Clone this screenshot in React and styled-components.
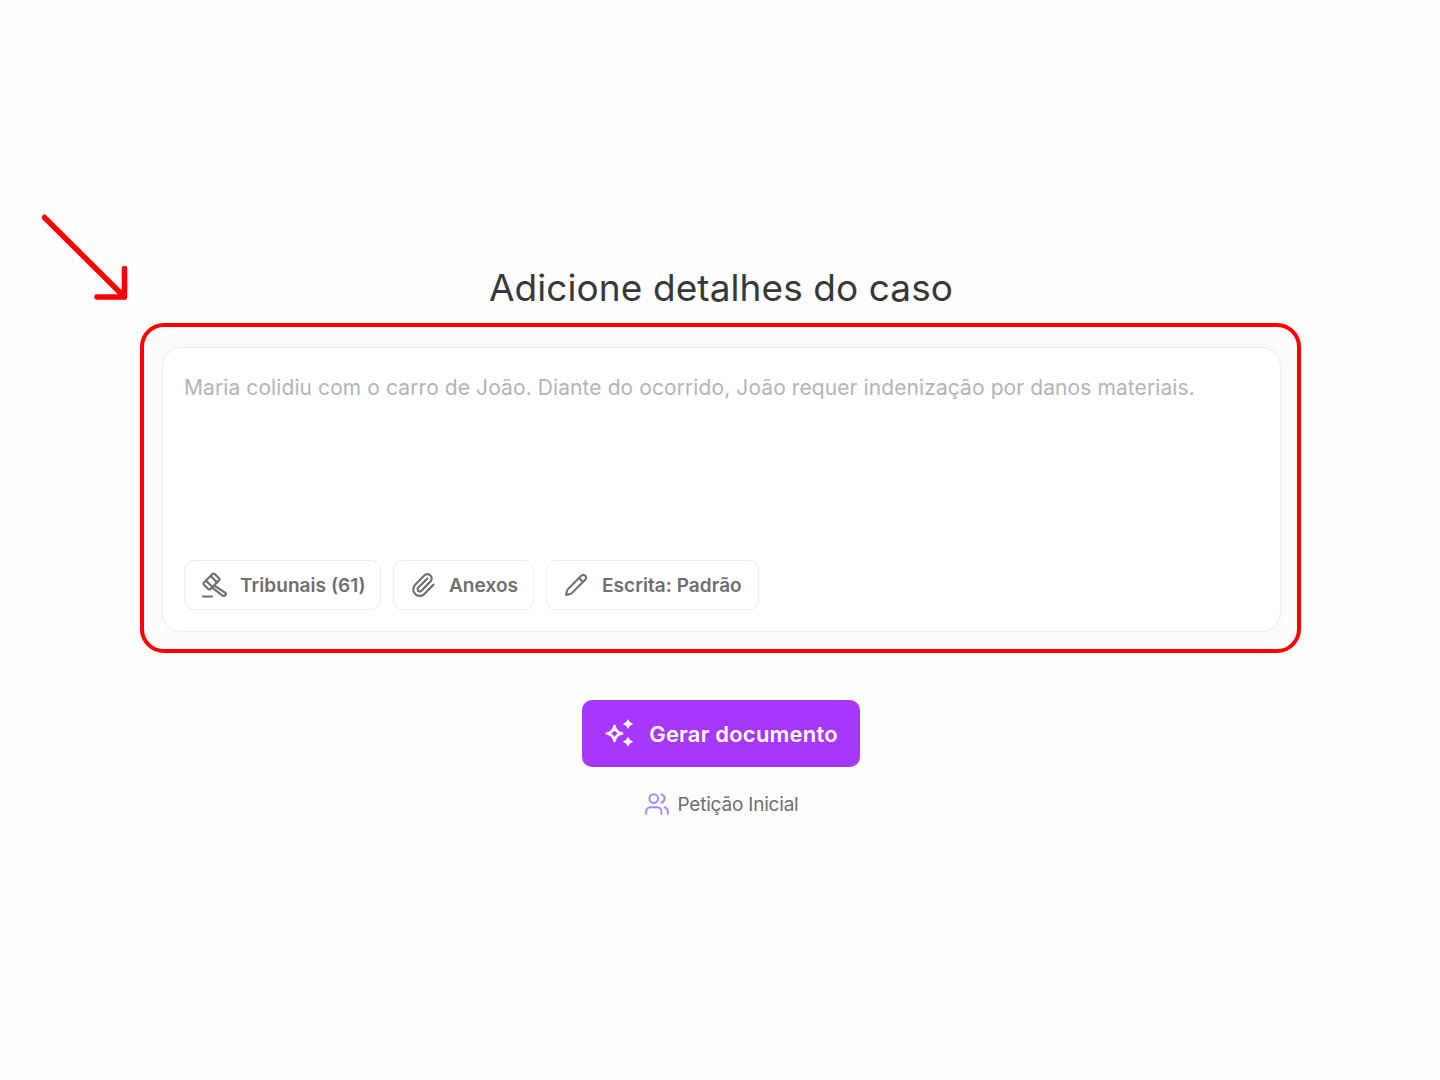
import React from "react";
import styled, { createGlobalStyle } from "styled-components";
import { Paperclip, Pencil, Users } from "lucide-react";

const Global = createGlobalStyle`
  html, body { margin: 0; padding: 0; background: #fdfdfd; }
  * { box-sizing: border-box; }
`;

const Page = styled.div`
  position: relative;
  width: 1440px;
  height: 1080px;
  background: #fdfdfd;
  display: flex;
  flex-direction: column;
  align-items: center;
  padding-top: 263px;
  font-family: Inter, "Liberation Sans", sans-serif;
`;

const Title = styled.h1`
  margin: 0 0 11px 2px;
  height: 49px;
  line-height: 49px;
  font-size: 37px;
  font-weight: 400;
  letter-spacing: 0.08px;
  color: #383838;
`;

const Highlight = styled.div`
  width: 1161px;
  height: 330px;
  margin-left: 1px;
  border: 4px solid #ff0000;
  border-radius: 24px;
  padding: 20px 16px 17px 18px;
  background: #fcfcfc;
`;

const Card = styled.div`
  height: 285px;
  background: #fff;
  border: 1px solid #ededed;
  border-radius: 20px;
  box-shadow: 0 0 14px rgba(0, 0, 0, 0.03);
  padding: 27px 21px 21px;
  display: flex;
  flex-direction: column;
  justify-content: space-between;
`;

const Placeholder = styled.div`
  font-size: 21px;
  line-height: 26px;
  letter-spacing: 0.09px;
  color: #b4b4b4;
`;

const Toolbar = styled.div`
  display: flex;
  gap: 12px;
`;

const Chip = styled.button`
  height: 50px;
  width: ${(p) => p.$w}px;
  display: flex;
  align-items: center;
  gap: 13px;
  padding: 0 16px;
  background: #fff;
  border: 1px solid #ebebeb;
  border-radius: 10px;
  font: 600 19px Inter, "Liberation Sans", sans-serif;
  letter-spacing: 0.05px;
  color: #6f6f6f;
  white-space: nowrap;
  svg { flex: none; }
`;

const ChipPencil = styled(Pencil)`
  margin: 0 1px;
`;

const Generate = styled.button`
  margin: 47px 0 0 2px;
  width: 278px;
  height: 67px;
  display: flex;
  align-items: center;
  justify-content: center;
  gap: 15px;
  border: 0;
  border-radius: 10px;
  background: #a936ff;
  color: #fff;
  font: 600 22px Inter, "Liberation Sans", sans-serif;
  letter-spacing: 0.2px;
`;

const DocType = styled.div`
  margin: 24px 0 0 3px;
  display: flex;
  align-items: center;
  gap: 7px;
  font-size: 19px;
  letter-spacing: -0.2px;
  color: #6e6e6e;
`;

const Arrow = styled.svg`
  position: absolute;
  left: 30px;
  top: 205px;
`;

const Sparkle = () => (
  <svg width="30" height="30" viewBox="0 0 30 30" fill="#fff">
    <path d="M10.5 7Q11.5 13.5 18 14.5Q11.5 15.5 10.5 22Q9.5 15.5 3 14.5Q9.5 13.5 10.5 7Z" fill="none" stroke="#fff" strokeWidth="2.7" strokeLinejoin="round" />
    <path d="M24 1.2Q24.5 4.5 28 5Q24.5 5.5 24 8.8Q23.5 5.5 20 5Q23.5 4.5 24 1.2Z" stroke="#fff" strokeWidth="1.4" strokeLinejoin="round" />
    <path d="M24 18.9Q24.5 22.2 28 22.7Q24.5 23.2 24 26.5Q23.5 23.2 20 22.7Q23.5 22.2 24 18.9Z" stroke="#fff" strokeWidth="1.4" strokeLinejoin="round" />
  </svg>
);

const GavelIcon = () => (
  <svg width="26" height="26" viewBox="0 0 26 26" fill="none" stroke="currentColor" strokeWidth="2.2" strokeLinejoin="round" strokeLinecap="round">
    <g transform="rotate(-45 10.5 9.5)">
      <rect x="3" y="5" width="15" height="9" rx="1.5" />
      <path d="M7.2 5V14M13.8 5V14" />
    </g>
    <path d="M14 14L24 20.6a1.9 1.9 0 0 1-2.4 3L11.5 15.8" />
    <path d="M2 24.5H11" />
  </svg>
);

export default function App() {
  return (
    <Page>
      <Global />
      <Arrow width="110" height="100" viewBox="0 0 110 100" fill="none" stroke="#ff0000" strokeWidth="5.5" strokeLinecap="round" strokeLinejoin="round">
        <path d="M14.5 12.5L94.5 92M94.5 63.5V92H67" />
      </Arrow>
      <Title>Adicione detalhes do caso</Title>
      <Highlight>
        <Card>
          <Placeholder>Maria colidiu com o carro de João. Diante do ocorrido, João requer indenização por danos materiais.</Placeholder>
          <Toolbar>
            <Chip $w={197}><GavelIcon />Tribunais (61)</Chip>
            <Chip $w={141}><Paperclip size={26} strokeWidth={2} />Anexos</Chip>
            <Chip $w={213}><ChipPencil size={24} strokeWidth={2} />Escrita: Padrão</Chip>
          </Toolbar>
        </Card>
      </Highlight>
      <Generate><Sparkle />Gerar documento</Generate>
      <DocType><Users size={26} color="#9a8cff" strokeWidth={1.8} />Petição Inicial</DocType>
    </Page>
  );
}
